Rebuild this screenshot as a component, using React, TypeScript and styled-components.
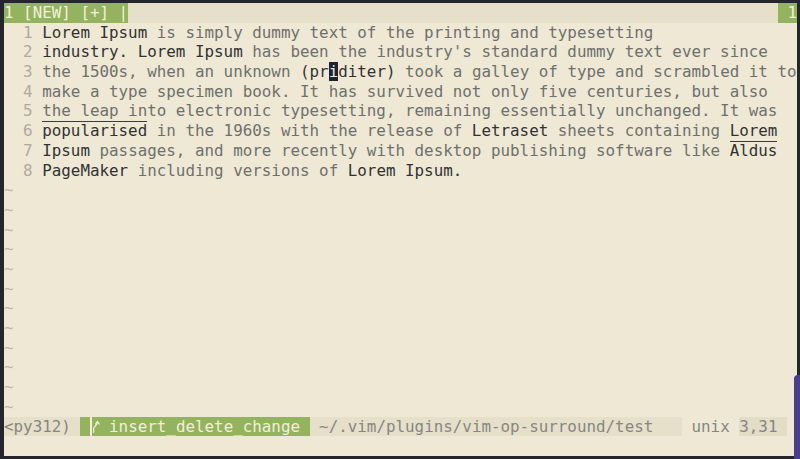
import React from 'react';
import styled, { createGlobalStyle, css } from 'styled-components';

const ROW = 19.7;

const GlobalStyle = createGlobalStyle`
  html, body {
    margin: 0;
    padding: 0;
    background: #24252d;
  }
`;

const Frame = styled.div`
  position: relative;
  width: 800px;
  height: 459px;
  box-sizing: border-box;
  padding: 3px 3px 3px 4px;
  background: #24252d;
  overflow: hidden;
`;

const Screen = styled.div`
  height: 100%;
  display: flex;
  flex-direction: column;
  background: #efe8d4;
  font-family: 'DejaVu Sans Mono', 'Liberation Mono', monospace;
  font-size: 15.86px;
  line-height: ${ROW}px;
  color: #6d716e;
  white-space: pre;
  overflow: hidden;
`;

const Bar = styled.div`
  display: flex;
  height: ${ROW}px;
  flex: none;
  background: #e6dfca;
`;

const Green = styled.span`
  background: #93b35e;
  color: #f3eedc;
`;

const Fill = styled.span<{ $plain?: boolean }>`
  flex: 1;
  ${(p) => p.$plain && 'background: #efe8d4;'}
`;

const Buffer = styled.div`
  flex: 1;
  display: flex;
  flex-direction: column;
`;

const Row = styled.div`
  height: ${ROW}px;
  display: flex;
`;

const LineNr = styled.span`
  width: 3ch;
  margin-right: 1ch;
  text-align: right;
  color: #aeab9d;
`;

const Tilde = styled.span`
  color: #bdb8a6;
`;

type Kind = 'n' | 'd' | 'o';

const Word = styled.span<{ $kind: Kind }>`
  color: ${(p) => (p.$kind === 'n' ? '#6d716e' : '#2f3335')};
  ${(p) =>
    p.$kind === 'o' &&
    css`
      display: inline-block;
      box-shadow: inset 0 1px 0 #3a3d3e;
    `}
`;

const Cursor = styled.span`
  background: #1e2236;
  color: #efe8d4;
`;

const Seg = styled.span<{ $tone: 'status' | 'plain' | 'dark' }>`
  background: ${(p) =>
    p.$tone === 'plain' ? '#efe8d4' : p.$tone === 'dark' ? '#e3dcc6' : '#e6dfca'};
  color: #858781;
`;

const BranchIcon = styled.span`
  display: inline-flex;
  width: 1ch;
  height: ${ROW}px;
  vertical-align: top;
  align-items: flex-end;
  padding-bottom: 2px;
  box-sizing: border-box;
  border-left: 2px solid #f3eedc;
`;

const Dock = styled.div`
  position: absolute;
  right: 0;
  top: 375px;
  bottom: 0;
  width: 6px;
  background: #4a3d8c;
  border-top-left-radius: 4px;
`;

type Piece = [string, Kind] | ['cursor', string];

const lines: Piece[][] = [
  [['Lorem Ipsum', 'd'], [' is simply dummy text of the printing and typesetting', 'n']],
  [['industry. Lorem Ipsum', 'd'], [" has been the industry's standard dummy text ever since", 'n']],
  [
    ['the 1500s, when an unknown ', 'n'],
    ['(pr', 'd'],
    ['cursor', 'i'],
    ['diter)', 'd'],
    [' took a galley of type and scrambled it to', 'n'],
  ],
  [['make a type specimen book. It has survived not only five centuries, but also', 'n']],
  [['the leap into electronic typesetting, remaining essentially unchanged. It was', 'n']],
  [
    ['popularised', 'o'],
    [' in the 1960s with the release of ', 'n'],
    ['Letraset', 'd'],
    [' sheets containing ', 'n'],
    ['Lorem', 'd'],
  ],
  [
    ['Ipsum', 'd'],
    [' passages, and more recently with desktop publishing software like ', 'n'],
    ['Aldus', 'o'],
  ],
  [['PageMaker', 'd'], [' including versions of ', 'n'], ['Lorem Ipsum.', 'd']],
];

const Branch = () => (
  <BranchIcon>
    <svg width="9" height="15" viewBox="0 0 9 15" fill="none" stroke="#f3eedc" strokeWidth="1.5" strokeLinecap="round">
      <path d="M2 14.5 V10 C2 6.5 6.5 7 6.5 2.5" />
      <path d="M4.2 4.6 L6.5 1.6 L8.6 4.6" />
    </svg>
  </BranchIcon>
);

const App = () => (
  <Frame>
    <GlobalStyle />
    <Screen>
      <Bar>
        <Green>1 [NEW] [+] |</Green>
        <Fill />
        <Green> 1</Green>
      </Bar>
      <Buffer>
        {lines.map((pieces, i) => (
          <Row key={i}>
            <LineNr>{i + 1}</LineNr>
            <span>
              {pieces.map((p, j) =>
                p[0] === 'cursor' ? (
                  <Cursor key={j}>{p[1]}</Cursor>
                ) : (
                  <Word key={j} $kind={p[1] as Kind}>
                    {p[0]}
                  </Word>
                ),
              )}
            </span>
          </Row>
        ))}
        {Array.from({ length: 12 }).map((_, i) => (
          <Row key={`t${i}`}>
            <Tilde>~</Tilde>
          </Row>
        ))}
      </Buffer>
      <Bar>
        <Seg $tone="status">{'<py312) '}</Seg>
        <Green>
          {' '}
          <Branch />
          {' insert_delete_change '}
        </Green>
        <Seg $tone="status">{' ~/.vim/plugins/vim-op-surround/test   '}</Seg>
        <Seg $tone="plain">{' unix '}</Seg>
        <Seg $tone="dark">{'3,31 '}</Seg>
        <Fill $plain />
      </Bar>
      <Row />
    </Screen>
    <Dock />
  </Frame>
);

export default App;
